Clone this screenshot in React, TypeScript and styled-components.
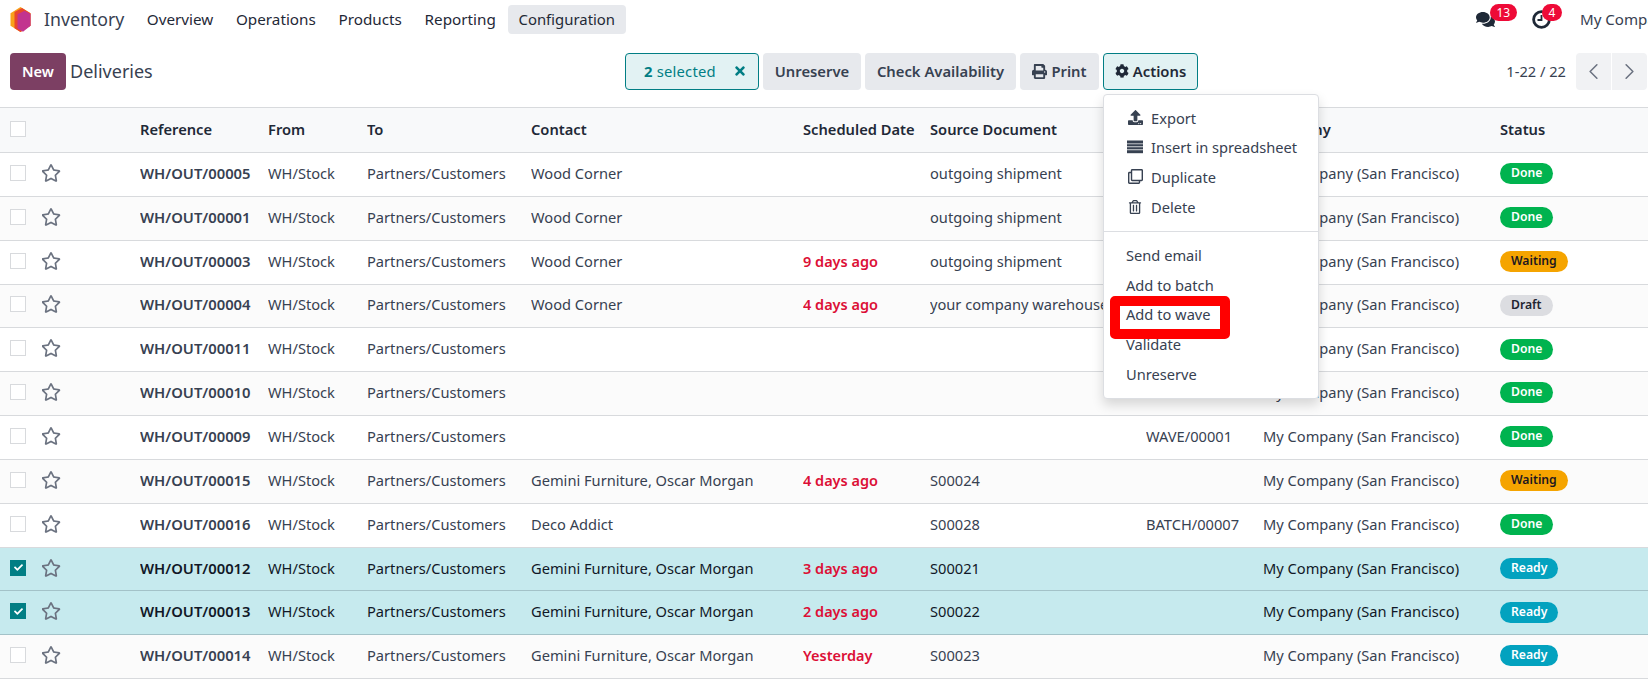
import React from 'react';
import styled, { createGlobalStyle } from 'styled-components';
import { FaCog, FaComments, FaPrint, FaRegClone, FaRegStar, FaRegTrashAlt, FaTimes, FaUpload, FaCheck } from 'react-icons/fa';
import { LuChevronLeft, LuChevronRight } from 'react-icons/lu';

type Status = 'Done' | 'Waiting' | 'Draft' | 'Ready';

type Delivery = {
  ref: string;
  contact: string;
  date: string;
  source: string;
  batch: string;
  status: Status;
  selected?: boolean;
};

const deliveries: Delivery[] = [
  { ref: 'WH/OUT/00005', contact: 'Wood Corner', date: '', source: 'outgoing shipment', batch: '', status: 'Done' },
  { ref: 'WH/OUT/00001', contact: 'Wood Corner', date: '', source: 'outgoing shipment', batch: '', status: 'Done' },
  { ref: 'WH/OUT/00003', contact: 'Wood Corner', date: '9 days ago', source: 'outgoing shipment', batch: '', status: 'Waiting' },
  { ref: 'WH/OUT/00004', contact: 'Wood Corner', date: '4 days ago', source: 'your company warehouse', batch: '', status: 'Draft' },
  { ref: 'WH/OUT/00011', contact: '', date: '', source: '', batch: '', status: 'Done' },
  { ref: 'WH/OUT/00010', contact: '', date: '', source: '', batch: 'WAVE/00001', status: 'Done' },
  { ref: 'WH/OUT/00009', contact: '', date: '', source: '', batch: 'WAVE/00001', status: 'Done' },
  { ref: 'WH/OUT/00015', contact: 'Gemini Furniture, Oscar Morgan', date: '4 days ago', source: 'S00024', batch: '', status: 'Waiting' },
  { ref: 'WH/OUT/00016', contact: 'Deco Addict', date: '', source: 'S00028', batch: 'BATCH/00007', status: 'Done' },
  { ref: 'WH/OUT/00012', contact: 'Gemini Furniture, Oscar Morgan', date: '3 days ago', source: 'S00021', batch: '', status: 'Ready', selected: true },
  { ref: 'WH/OUT/00013', contact: 'Gemini Furniture, Oscar Morgan', date: '2 days ago', source: 'S00022', batch: '', status: 'Ready', selected: true },
  { ref: 'WH/OUT/00014', contact: 'Gemini Furniture, Oscar Morgan', date: 'Yesterday', source: 'S00023', batch: '', status: 'Ready' },
];

const statusColors: Record<Status, { bg: string; fg: string }> = {
  Done: { bg: '#00b34f', fg: '#fff' },
  Waiting: { bg: '#f5a400', fg: '#1c1720' },
  Draft: { bg: '#dcdde1', fg: '#1f2430' },
  Ready: { bg: '#03a2bf', fg: '#fff' },
};

const GlobalStyle = createGlobalStyle`
  html, body {
    margin: 0;
    padding: 0;
    background: #fff;
    overflow: hidden;
  }
  body {
    font-family: "Noto Sans", "Open Sans", sans-serif;
    font-size: 14.65px;
    color: #374151;
  }
`;

const Page = styled.div`
  position: relative;
  width: 1648px;
  height: 686px;
  overflow: hidden;
`;

const NavBar = styled.nav`
  display: flex;
  align-items: center;
  height: 38px;
  padding-left: 10px;
`;

const AppName = styled.span`
  font-size: 17.7px;
  color: #374151;
  margin: 0 12px 0 13px;
`;

const NavItem = styled.span<{ $active?: boolean }>`
  display: flex;
  align-items: center;
  height: 29px;
  margin-right: 1.7px;
  padding: 0 10.5px;
  border-radius: 4px;
  font-size: ${(p) => (p.$active ? '14.9px' : '15.25px')};
  color: #1f2937;
  background: ${(p) => (p.$active ? '#e7e9ed' : 'transparent')};
`;

const NavRight = styled.div`
  display: flex;
  align-items: center;
  margin-left: auto;
  width: 172px;
  flex: none;
  white-space: nowrap;
  font-size: 15.1px;
  color: #374151;
`;

const CompanyName = styled.span`
  min-width: 0;
  overflow: hidden;
`;

const NotifyIcon = styled.span<{ $width: number }>`
  position: relative;
  display: flex;
  width: ${(p) => p.$width}px;
  flex: none;
  color: #1f2937;
`;

const Badge = styled.span<{ $left: number }>`
  position: absolute;
  left: ${(p) => p.$left}px;
  top: -6px;
  padding: 0 6.5px;
  height: 17px;
  line-height: 17px;
  border-radius: 9px;
  background: #ee0a37;
  color: #fff;
  font-size: 12px;
`;

const ControlBar = styled.div`
  display: grid;
  grid-template-columns: 615px 1fr auto;
  align-items: center;
  height: 38px;
  margin-top: 14px;
  padding: 0 1px 0 10px;
`;

const TitleGroup = styled.div`
  display: flex;
  align-items: center;
  gap: 4px;
`;

const NewButton = styled.button`
  height: 37px;
  width: 56px;
  border: 0;
  border-radius: 4px;
  background: #7c3f63;
  color: #fff;
  font: 600 14.6px "Noto Sans", sans-serif;
`;

const Title = styled.span`
  font-size: 18px;
  color: #374151;
`;

const Actions = styled.div`
  display: flex;
  gap: 4px;
`;

const ActionButton = styled.button<{ $width: number }>`
  display: flex;
  align-items: center;
  justify-content: center;
  gap: 4px;
  width: ${(p) => p.$width}px;
  height: 37px;
  padding: 0;
  border: 0;
  border-radius: 4px;
  background: #e7e9ed;
  color: #374151;
  font: 600 14.8px "Noto Sans", sans-serif;
`;

const SelectedButton = styled(ActionButton)`
  justify-content: flex-start;
  gap: 17px;
  padding-left: 18px;
  border: 1px solid #017e84;
  background: #e2f2f3;
  color: #017e84;
  font-weight: 400;
  letter-spacing: 0.2px;
  b {
    font-weight: 700;
  }
`;

const ActionsToggle = styled(ActionButton)`
  border: 1px solid #017e84;
  background: #e2f2f3;
  color: #1f2937;
`;

const Pager = styled.div`
  display: flex;
  align-items: center;
  color: #374151;
  font-size: 14.65px;
`;

const PagerLabel = styled.span`
  margin-right: 10px;
`;

const PagerButton = styled.span<{ $side: 'left' | 'right' }>`
  display: flex;
  align-items: center;
  justify-content: center;
  width: 35px;
  height: 37px;
  margin-left: ${(p) => (p.$side === 'right' ? '1px' : '0')};
  background: #f1f2f4;
  color: #6b7280;
  border-radius: ${(p) => (p.$side === 'left' ? '4px 0 0 4px' : '0 4px 4px 0')};
`;

const Table = styled.table`
  width: 1648px;
  margin-top: 17px;
  table-layout: fixed;
  border-collapse: collapse;
`;

const HeadRow = styled.tr`
  height: 45px;
  background: #f8f9fa;
  border-top: 1px solid #d8dadd;
  border-bottom: 1px solid #d8dadd;
`;

const HeadCell = styled.th`
  padding: 0 0 2px;
  text-align: left;
  font-size: 14.7px;
  font-weight: 600;
  color: #1f2937;
  white-space: nowrap;
  overflow: hidden;
`;

const Row = styled.tr<{ $selected?: boolean; $odd: boolean }>`
  height: 43.85px;
  background: ${(p) => (p.$selected ? '#c6eaee' : p.$odd ? '#fbfbfb' : '#fff')};
  border-bottom: 1px solid ${(p) => (p.$selected ? '#a3c2c8' : '#d8dadd')};
  color: ${(p) => (p.$selected ? '#111827' : '#374151')};
`;

const Cell = styled.td`
  padding: 0 0 3px;
  font-size: 14.65px;
  white-space: nowrap;
  overflow: hidden;
`;

const RefCell = styled(Cell)`
  font-size: 14.8px;
  font-weight: 600;
`;

const DateCell = styled(Cell)`
  font-size: 14.5px;
  font-weight: 600;
  color: #dc0f36;
`;

const BoxCell = styled.div`
  display: flex;
  align-items: center;
  padding-left: 10px;
`;

const CheckBox = styled.span<{ $checked?: boolean }>`
  display: flex;
  align-items: center;
  justify-content: center;
  width: 14px;
  height: 14px;
  border: 1px solid ${(p) => (p.$checked ? '#017e84' : '#d8dadd')};
  background: ${(p) => (p.$checked ? '#017e84' : '#fff')};
  color: #fff;
  font-size: 9px;
`;

const Star = styled(FaRegStar)`
  margin-left: -1px;
  font-size: 20px;
  color: #6b7280;
  display: block;
`;

const StatusPill = styled.span<{ $status: Status }>`
  display: inline-block;
  height: 21px;
  line-height: 20px;
  vertical-align: middle;
  padding: 0 11px;
  border-radius: 11px;
  font-size: 12.2px;
  font-weight: 600;
  background: ${(p) => statusColors[p.$status].bg};
  color: ${(p) => statusColors[p.$status].fg};
`;

const Menu = styled.div`
  position: absolute;
  left: 1103px;
  top: 94px;
  width: 216px;
  padding: 9px 0 9px;
  box-sizing: border-box;
  border: 1px solid #dcdee2;
  border-radius: 4px;
  background: #fff;
  box-shadow: 0 6px 12px rgba(0, 0, 0, 0.15);
`;

const MenuItem = styled.div`
  display: flex;
  align-items: center;
  box-sizing: border-box;
  height: 29.6px;
  padding: 0 0 2px 22px;
  color: #374151;
  font-size: 14.65px;
  white-space: nowrap;
`;

const MenuIcon = styled.span`
  display: flex;
  justify-content: center;
  width: 18px;
  margin-right: 7px;
  font-size: 15px;
  color: #374151;
`;

const MenuDivider = styled.div`
  height: 1px;
  margin: 9px 0;
  background: #dcdee2;
`;

const Highlight = styled.div`
  position: absolute;
  left: 1110px;
  top: 296px;
  width: 120px;
  height: 43px;
  box-sizing: border-box;
  border: 10px solid #ff0000;
  border-radius: 5px;
`;

const ListIcon = () => (
  <svg width="16" height="14" viewBox="0 0 16 14" fill="currentColor">
    <rect y="0.5" width="16" height="3" />
    <rect y="4.2" width="16" height="2.2" />
    <rect y="7.2" width="16" height="2.2" />
    <rect y="10.2" width="16" height="3" />
  </svg>
);

const ClockIcon = () => (
  <svg width="19" height="19" viewBox="0 0 19 19" fill="none" stroke="#1f2937">
    <circle cx="9.5" cy="9.5" r="7.9" strokeWidth="2.8" />
    <path d="M9.5 5v5H5.5" strokeWidth="1.8" />
  </svg>
);

const Logo = () => (
  <svg width="21" height="25" viewBox="0 0 21 25">
    <path d="M10.5 0 20.5 6.2v12.6l-10 6.2-10-6.2V6.2z" fill="#f9a11b" />
    <path d="M12 1 20.5 6.2v12.6l-10 6.2-6-3.7V5z" fill="#e9472b" />
    <path d="M14.5 3.8 20.5 7v11.8l-7.5 6-5.5-3.2V7.2z" fill="#c2348f" />
  </svg>
);

const App = () => (
  <Page>
    <GlobalStyle />
    <NavBar>
      <Logo />
      <AppName>Inventory</AppName>
      <NavItem>Overview</NavItem>
      <NavItem>Operations</NavItem>
      <NavItem>Products</NavItem>
      <NavItem>Reporting</NavItem>
      <NavItem $active>Configuration</NavItem>
      <NavRight>
        <NotifyIcon $width={56}>
          <FaComments size={19} />
          <Badge $left={14}>13</Badge>
        </NotifyIcon>
        <NotifyIcon $width={48}>
          <ClockIcon />
          <Badge $left={10}>4</Badge>
        </NotifyIcon>
        <CompanyName>My Company (San Francisco)</CompanyName>
      </NavRight>
    </NavBar>

    <ControlBar>
      <TitleGroup>
        <NewButton>New</NewButton>
        <Title>Deliveries</Title>
      </TitleGroup>
      <Actions>
        <SelectedButton $width={134}>
          <span><b>2</b> selected</span>
          <FaTimes size={14} />
        </SelectedButton>
        <ActionButton $width={98}>Unreserve</ActionButton>
        <ActionButton $width={151}>Check Availability</ActionButton>
        <ActionButton $width={79}><FaPrint size={15} /> Print</ActionButton>
        <ActionsToggle $width={95}><FaCog size={14} /> Actions</ActionsToggle>
      </Actions>
      <Pager>
        <PagerLabel>1-22 / 22</PagerLabel>
        <PagerButton $side="left"><LuChevronLeft size={27} strokeWidth={1.4} /></PagerButton>
        <PagerButton $side="right"><LuChevronRight size={27} strokeWidth={1.4} /></PagerButton>
      </Pager>
    </ControlBar>

    <Table>
      <colgroup>
        <col width="42" />
        <col width="98" />
        <col width="128" />
        <col width="99" />
        <col width="164" />
        <col width="272" />
        <col width="127" />
        <col width="216" />
        <col width="117" />
        <col width="237" />
        <col width="148" />
      </colgroup>
      <thead>
        <HeadRow>
          <HeadCell><BoxCell><CheckBox /></BoxCell></HeadCell>
          <HeadCell />
          <HeadCell>Reference</HeadCell>
          <HeadCell>From</HeadCell>
          <HeadCell>To</HeadCell>
          <HeadCell>Contact</HeadCell>
          <HeadCell>Scheduled Date</HeadCell>
          <HeadCell>Source Document</HeadCell>
          <HeadCell>Batch Transfer</HeadCell>
          <HeadCell>Company</HeadCell>
          <HeadCell>Status</HeadCell>
        </HeadRow>
      </thead>
      <tbody>
        {deliveries.map((d, i) => (
          <Row key={d.ref} $selected={d.selected} $odd={i % 2 === 1}>
            <Cell>
              <BoxCell>
                <CheckBox $checked={d.selected}>{d.selected && <FaCheck />}</CheckBox>
              </BoxCell>
            </Cell>
            <Cell><Star /></Cell>
            <RefCell>{d.ref}</RefCell>
            <Cell>WH/Stock</Cell>
            <Cell>Partners/Customers</Cell>
            <Cell>{d.contact}</Cell>
            <DateCell>{d.date}</DateCell>
            <Cell>{d.source}</Cell>
            <Cell>{d.batch}</Cell>
            <Cell>My Company (San Francisco)</Cell>
            <Cell><StatusPill $status={d.status}>{d.status}</StatusPill></Cell>
          </Row>
        ))}
      </tbody>
    </Table>

    <Menu>
      <MenuItem><MenuIcon><FaUpload /></MenuIcon>Export</MenuItem>
      <MenuItem><MenuIcon><ListIcon /></MenuIcon>Insert in spreadsheet</MenuItem>
      <MenuItem><MenuIcon><FaRegClone /></MenuIcon>Duplicate</MenuItem>
      <MenuItem><MenuIcon><FaRegTrashAlt size={14} /></MenuIcon>Delete</MenuItem>
      <MenuDivider />
      <MenuItem>Send email</MenuItem>
      <MenuItem>Add to batch</MenuItem>
      <MenuItem>Add to wave</MenuItem>
      <MenuItem>Validate</MenuItem>
      <MenuItem>Unreserve</MenuItem>
    </Menu>
    <Highlight />
  </Page>
);

export default App;
